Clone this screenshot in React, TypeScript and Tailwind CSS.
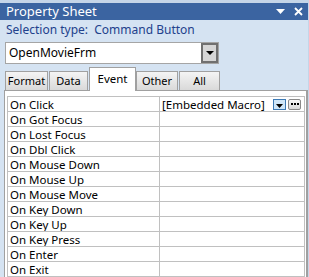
import React from 'react';

const events = [
  'On Click',
  'On Got Focus',
  'On Lost Focus',
  'On Dbl Click',
  'On Mouse Down',
  'On Mouse Up',
  'On Mouse Move',
  'On Key Down',
  'On Key Up',
  'On Key Press',
  'On Enter',
  'On Exit',
];

const tabs = [
  { label: 'Format', w: 'w-[43px]' },
  { label: 'Data', w: 'w-[39px]' },
  { label: 'Event', w: 'w-[47px]', active: true },
  { label: 'Other', w: 'w-[42px]' },
  { label: 'All', w: 'w-[41px]' },
];

function Caret({ w = 9, h = 5, color = 'black' }: { w?: number; h?: number; color?: string }) {
  return (
    <svg width={w} height={h} viewBox={`0 0 ${w} ${h}`}>
      <path d={`M0 0h${w}L${w / 2} ${h}z`} fill={color} />
    </svg>
  );
}

export default function App() {
  return (
    <div
      className="w-[309px] h-[277px] overflow-hidden bg-[#c5d5e8] pt-[3px] pr-[1px] text-[11.5px] text-black"
      style={{ fontFamily: '"Noto Sans", "Open Sans", sans-serif' }}
    >
      {/* title bar */}
      <div className="h-[17px] bg-[#3b64a1] flex items-center pl-[6px] pr-[4px] text-white text-[13px] leading-[15px]">
        <span className="flex-1">Property Sheet</span>
        <div className="mr-[9px] flex">
          <Caret color="white" />
        </div>
        <svg width="9" height="9" viewBox="0 0 9 9" className="mr-[1px]">
          <path d="M1 1l7 7M8 1L1 8" stroke="white" strokeWidth="1.8" />
        </svg>
      </div>

      <div className="h-[257px] bg-[#d5e3f2] flex flex-col">
        {/* selection type */}
        <div className="h-[22px] pl-[6px] pt-[1px] text-[#22418c] text-[12px] leading-[18px]">
          Selection type:&nbsp; Command Button
        </div>

        {/* object combo */}
        <div className="ml-[5px] w-[214px] h-[22px] bg-white border border-[#a5a5a5] flex items-center pl-[3px]">
          <span className="flex-1 text-[12px] leading-[16px]">OpenMovieFrm</span>
          <div className="w-[17px] h-[20px] border-2 border-[#707070] bg-[#d6d6d6] flex items-center justify-center">
            <Caret w={8} h={4} />
          </div>
        </div>

        {/* tabs */}
        <div className="mt-[1px] pl-[5px] flex items-end h-[25px]">
          {tabs.map((t) =>
            t.active ? (
              <div
                key={t.label}
                className={`${t.w} h-[24px] bg-white border border-b-0 border-[#a0a0a0] flex items-center justify-center relative z-10 -mb-[1px] pb-[2px] leading-[14px] text-[11.5px]`}
              >
                {t.label}
              </div>
            ) : (
              <div
                key={t.label}
                className={`${t.w} mr-[1px] h-[19px] bg-gradient-to-b from-[#f4f4f4] to-[#d9d9d9] border border-b-0 border-[#a0a0a0] flex items-center justify-center leading-[14px] text-[11px]`}
              >
                {t.label}
              </div>
            )
          )}
        </div>

        {/* property grid */}
        <div className="ml-[4px] flex-1 bg-white border-t border-l border-r-2 border-[#a0a0a0] pt-[5px] pl-[2px] pr-[1px]">
          <div className="border-t border-l border-r border-[#c0c0c0]">
            {events.map((e, i) => (
              <div key={e} className="h-[15px] flex border-b border-[#c0c0c0]">
                <div className="w-[152px] border-r border-[#c0c0c0] pl-[2px] flex items-center leading-[13px] overflow-hidden">
                  {e}
                </div>
                <div className="flex-1 flex items-center pl-[2px]">
                  {i === 0 && (
                    <>
                      <span className="flex-1 leading-[13px]">[Embedded Macro]</span>
                      <div className="w-[13px] h-[11px] bg-[#cfe6f8] border border-[#3d7ab5] flex items-end justify-center pb-[1px] mr-[2px]">
                        <Caret w={7} h={4} />
                      </div>
                      <div className="w-[13px] h-[11px] rounded-[2px] border border-[#8a8a8a] bg-gradient-to-b from-[#f8f8f8] to-[#dadada] flex items-center justify-center mr-[3px]">
                        <svg width="8" height="2" viewBox="0 0 8 2">
                          <rect x="0" y="0" width="2" height="2" fill="black" />
                          <rect x="3" y="0" width="2" height="2" fill="black" />
                          <rect x="6" y="0" width="2" height="2" fill="black" />
                        </svg>
                      </div>
                    </>
                  )}
                </div>
              </div>
            ))}
          </div>
        </div>
      </div>
    </div>
  );
}
